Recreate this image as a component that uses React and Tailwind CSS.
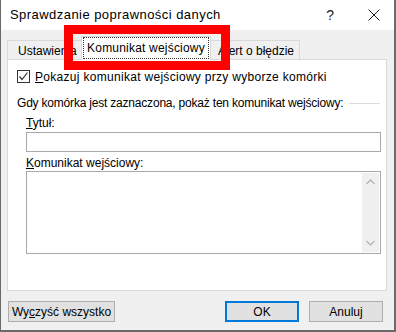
import React from "react";

const Check = () => (
  <svg width="11" height="11" viewBox="0 0 11 11" className="block">
    <polyline points="1.5,5.5 4,8.5 9.5,1.5" fill="none" stroke="#333" strokeWidth="1.2" />
  </svg>
);

const Chevron = ({ up }) => (
  <svg width="9" height="6" viewBox="0 0 9 6" className="block">
    <polyline
      points={up ? "0.5,5 4.5,1 8.5,5" : "0.5,1 4.5,5 8.5,1"}
      fill="none"
      stroke="#b4b4b4"
      strokeWidth="1.3"
    />
  </svg>
);

const App = () => {
  return (
    <div
      className="relative w-[396px] h-[332px] flex flex-col bg-[#f0f0f0] text-[12px] text-black border-l border-r-2 border-b-2 border-[#6a6a6a] overflow-hidden"
      style={{ fontFamily: '"Liberation Sans", Arial, sans-serif' }}
    >
      {/* Title bar */}
      <div className="h-[30px] bg-white flex items-center pl-[9px] pr-[14px] shrink-0">
        <span className="text-[13px] tracking-[0.45px] flex-1">Sprawdzanie poprawności danych</span>
        <span className="text-[14px] mr-[34px] text-[#222]">?</span>
        <svg width="12" height="12" viewBox="0 0 12 12" className="block">
          <path d="M0.5 0.5 L11.5 11.5 M11.5 0.5 L0.5 11.5" stroke="#222" strokeWidth="1" />
        </svg>
      </div>

      {/* Body */}
      <div className="flex-1 flex flex-col px-[6px] pt-[6px]">
        {/* Tabs */}
        <div className="flex items-end h-[23px]">
          <div className="h-[19px] w-[74px] bg-[#f0f0f0] border-t border-l border-[#d9d9d9] flex items-center pl-[10px] pt-[1px]">
            Ustawienia
          </div>
          <div className="h-[24px] w-[130px] bg-white border-t border-l border-r border-[#d9d9d9] -mb-px relative z-10 flex items-center justify-center pb-[2px]">
            <span className="px-[3px] py-[1px] outline outline-1 outline-dotted outline-[#333] tracking-[0.2px]">Komunikat wejściowy</span>
          </div>
          <div className="h-[19px] w-[89px] bg-[#f0f0f0] border-t border-r border-[#d9d9d9] flex items-center pl-[7px] pt-[1px]">
            Alert o błędzie
          </div>
        </div>

        {/* Panel */}
        <div className="h-[232px] bg-white border border-[#d9d9d9] w-[380px] flex flex-col pl-[9px]">
          <div className="flex items-center mt-[10px] h-[13px]">
            <div className="w-[13px] h-[13px] border border-[#333] bg-white flex items-center justify-center">
              <Check />
            </div>
            <span className="ml-[5px] tracking-[0.3px]">
              <span className="underline">P</span>okazuj komunikat wejściowy przy wyborze komórki
            </span>
          </div>

          <div className="flex items-center mt-[13px] h-[14px] pr-[6px]">
            <span className="whitespace-nowrap tracking-[-0.2px]">Gdy komórka jest zaznaczona, pokaż ten komunikat wejściowy:</span>
            <div className="flex-1 h-px bg-[#dcdcdc] ml-[6px]"></div>
          </div>

          <div className="pl-[9px] pr-[5px] flex flex-col">
            <div className="mt-[6px] h-[14px] leading-[14px]">
              <span className="underline">T</span>ytuł:
            </div>
            <div className="mt-[2px] h-[20px] border border-[#a9a9a9] bg-white"></div>
            <div className="mt-[4px] h-[14px] leading-[14px]">
              <span className="underline">K</span>omunikat wejściowy:
            </div>
            <div className="mt-[1px] h-[83px] border border-[#a9a9a9] bg-white flex justify-end p-px">
              <div className="w-[17px] bg-[#f0f0f0] flex flex-col items-center justify-between py-[6px]">
                <Chevron up />
                <Chevron />
              </div>
            </div>
          </div>
        </div>

        {/* Buttons */}
        <div className="flex items-center mt-[10px] pr-[5px]">
          <button className="h-[21px] w-[107px] bg-[#e1e1e1] border border-[#adadad] ml-px">
            Wy<span className="underline">c</span>zyść wszystko
          </button>
          <div className="flex-1"></div>
          <button className="h-[21px] w-[74px] bg-[#e1e1e1] border-2 border-[#0078d7]">OK</button>
          <button className="h-[21px] w-[74px] bg-[#e1e1e1] border border-[#adadad] ml-[10px]">Anuluj</button>
        </div>
      </div>

      {/* Red annotation frame */}
      <div className="absolute left-[63px] top-[25px] w-[166px] h-[45px] border-[9px] border-[#ff0000] z-20 pointer-events-none"></div>
    </div>
  );
};

export default App;
